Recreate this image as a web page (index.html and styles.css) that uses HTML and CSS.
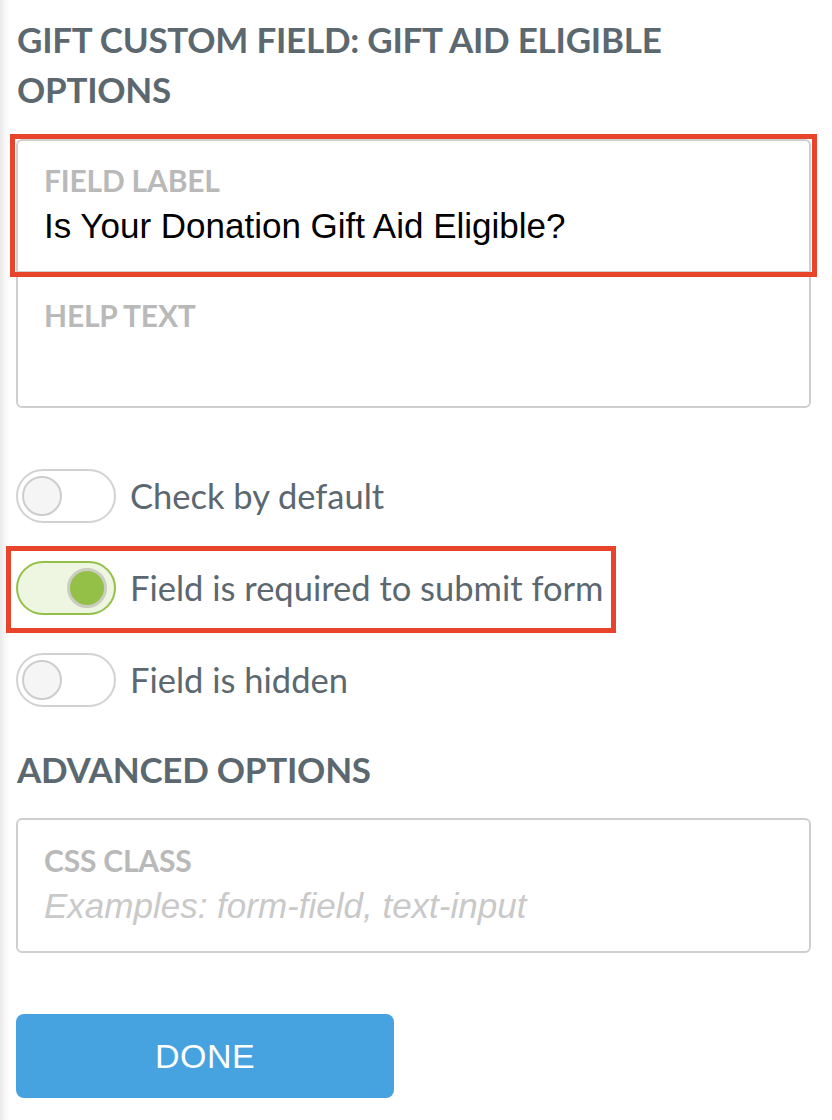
FILE: index.html
```html
<!DOCTYPE html>
<html>
<head>
<meta charset="utf-8">
<link rel="stylesheet" href="styles.css">
</head>
<body>
<div class="panel">
  <h1 class="title main-title">GIFT CUSTOM FIELD: GIFT AID ELIGIBLE OPTIONS</h1>
  <div class="group">
    <div class="field field-first highlight-field">
      <div class="label">FIELD LABEL</div>
      <div class="value">Is Your Donation Gift Aid Eligible?</div>
    </div>
    <div class="field field-last">
      <div class="label">HELP TEXT</div>
      <div class="value"></div>
    </div>
  </div>
  <div class="toggles">
    <div class="row">
      <span class="switch"><span class="knob"></span></span>
      <span class="row-text">Check by default</span>
    </div>
    <div class="row highlight-row">
      <span class="switch on"><span class="knob"></span></span>
      <span class="row-text">Field is required to submit form</span>
    </div>
    <div class="row">
      <span class="switch"><span class="knob"></span></span>
      <span class="row-text">Field is hidden</span>
    </div>
  </div>
  <h2 class="title adv">ADVANCED OPTIONS</h2>
  <div class="group single">
    <div class="field">
      <div class="label">CSS CLASS</div>
      <div class="value placeholder">Examples: form-field, text-input</div>
    </div>
  </div>
  <button class="done">DONE</button>
</div>
</body>
</html>
```

FILE: styles.css
```css
html, body {
  margin: 0;
  padding: 0;
}
body {
  width: 832px;
  height: 1120px;
  overflow: hidden;
  background: linear-gradient(to right, #e9e9e9 0px, #f7f7f7 5px, #ffffff 10px);
  font-family: Lato, "Noto Sans", sans-serif;
}
.panel {
  padding: 0 21px 0 16px;
  display: flex;
  flex-direction: column;
}
.title {
  margin: 14px 0 0 1px;
  font-size: 35px;
  line-height: 50px;
  font-weight: 700;
  color: #5b6870;
  letter-spacing: -0.25px;
}
.main-title {
  max-width: 700px;
}
.group {
  margin-top: 25px;
  display: flex;
  flex-direction: column;
}
.field {
  border: 2px solid #cfcfcf;
  background: #fff;
  box-sizing: border-box;
  padding: 23px 26px 0 26px;
}
.field-first {
  border-radius: 6px 6px 0 0;
  height: 134px;
}
.field-last {
  border-top: none;
  border-radius: 0 0 6px 6px;
  height: 135px;
  padding-top: 26px;
}
.single .field {
  border-radius: 6px;
  height: 135px;
  padding-top: 24px;
}
.label {
  font-family: Lato, sans-serif;
  font-weight: 700;
  font-size: 30px;
  line-height: 32px;
  color: #b9b9b9;
  letter-spacing: -0.2px;
}
.value {
  font-family: "Liberation Sans", Arial, sans-serif;
  font-size: 35px;
  line-height: 40px;
  color: #000;
  margin-top: 10px;
  min-height: 40px;
  white-space: nowrap;
}
.placeholder {
  font-style: italic;
  color: #c9c9c9;
}
.highlight-field {
  position: relative;
}
.highlight-field::after {
  content: "";
  position: absolute;
  top: -7px;
  left: -8px;
  right: -8px;
  bottom: -6px;
  border: 5px solid #e8432b;
  pointer-events: none;
}
.toggles {
  margin-top: 61px;
  display: flex;
  flex-direction: column;
  gap: 38px;
}
.row {
  display: flex;
  align-items: center;
  gap: 14px;
  height: 54px;
  align-self: flex-start;
}
.highlight-row {
  position: relative;
}
.highlight-row::after {
  content: "";
  position: absolute;
  top: -15px;
  left: -10px;
  right: -13px;
  bottom: -18px;
  border: 5px solid #e8432b;
  pointer-events: none;
}
.switch {
  width: 100px;
  height: 54px;
  box-sizing: border-box;
  border: 2px solid #d2d2d2;
  border-radius: 27px;
  background: #fff;
  display: flex;
  align-items: center;
  padding: 0 4px;
  flex-shrink: 0;
}
.knob {
  width: 40px;
  height: 40px;
  box-sizing: border-box;
  border-radius: 50%;
  border: 2px solid #cdcdcd;
  background: #f5f5f5;
}
.switch.on {
  border-color: #93c048;
  background: #eef5e1;
  justify-content: flex-end;
  padding-right: 7px;
}
.switch.on .knob {
  background: #94c047;
  border: 3px solid #c9cdc2;
}
.row-text {
  font-size: 34.5px;
  color: #5b6870;
  line-height: 40px;
  white-space: nowrap;
}
.adv {
  margin-top: 37px;
}
.single {
  margin-top: 24px;
}
.done {
  margin-top: 61px;
  align-self: flex-start;
  width: 378px;
  height: 84px;
  border: none;
  border-radius: 8px;
  background: #46a3df;
  color: #fff;
  font-family: "Liberation Sans", Arial, sans-serif;
  font-size: 34px;
  letter-spacing: 0.5px;
  padding: 0;
}
```
